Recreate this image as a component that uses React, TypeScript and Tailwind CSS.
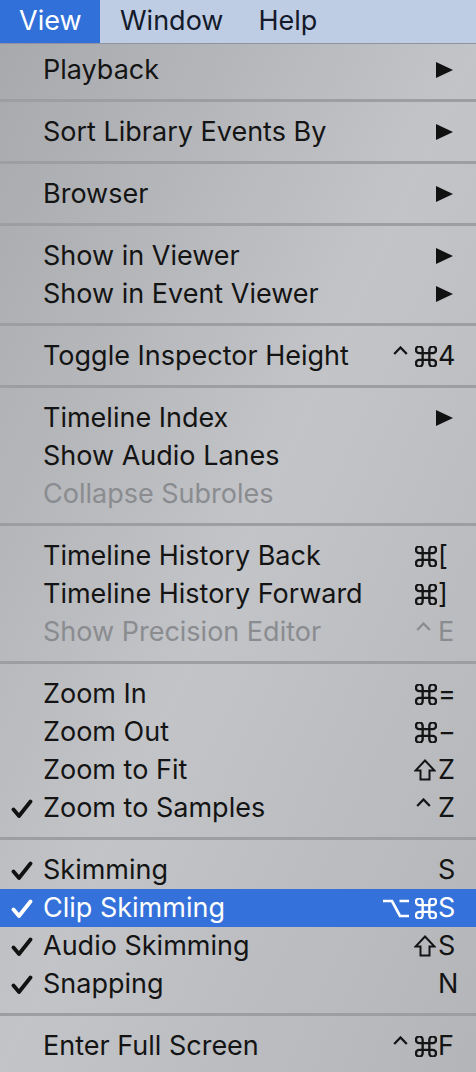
import React from "react";

type Item =
  | { type: "sep" }
  | {
      type: "item";
      label: string;
      sub?: boolean;
      mods?: string[];
      k?: string;
      checked?: boolean;
      disabled?: boolean;
      active?: boolean;
    };

const items: Item[] = [
  { type: "item", label: "Playback", sub: true },
  { type: "sep" },
  { type: "item", label: "Sort Library Events By", sub: true },
  { type: "sep" },
  { type: "item", label: "Browser", sub: true },
  { type: "sep" },
  { type: "item", label: "Show in Viewer", sub: true },
  { type: "item", label: "Show in Event Viewer", sub: true },
  { type: "sep" },
  { type: "item", label: "Toggle Inspector Height", mods: ["ctrl", "cmd"], k: "4" },
  { type: "sep" },
  { type: "item", label: "Timeline Index", sub: true },
  { type: "item", label: "Show Audio Lanes" },
  { type: "item", label: "Collapse Subroles", disabled: true },
  { type: "sep" },
  { type: "item", label: "Timeline History Back", mods: ["cmd"], k: "[" },
  { type: "item", label: "Timeline History Forward", mods: ["cmd"], k: "]" },
  { type: "item", label: "Show Precision Editor", mods: ["ctrl"], k: "E", disabled: true },
  { type: "sep" },
  { type: "item", label: "Zoom In", mods: ["cmd"], k: "=" },
  { type: "item", label: "Zoom Out", mods: ["cmd"], k: "−" },
  { type: "item", label: "Zoom to Fit", mods: ["shift"], k: "Z" },
  { type: "item", label: "Zoom to Samples", mods: ["ctrl"], k: "Z", checked: true },
  { type: "sep" },
  { type: "item", label: "Skimming", k: "S", checked: true },
  { type: "item", label: "Clip Skimming", mods: ["opt", "cmd"], k: "S", checked: true, active: true },
  { type: "item", label: "Audio Skimming", mods: ["shift"], k: "S", checked: true },
  { type: "item", label: "Snapping", k: "N", checked: true },
  { type: "sep" },
  { type: "item", label: "Enter Full Screen", mods: ["ctrl", "cmd"], k: "F" },
];

function Check({ color }: { color: string }) {
  return (
    <svg width="22" height="20" viewBox="0 0 22 20">
      <path
        d="M2.5 10.5 L8 17 L19.5 2.5"
        fill="none"
        stroke={color}
        strokeWidth="3.8"
        strokeLinecap="round"
        strokeLinejoin="round"
      />
    </svg>
  );
}

function Arrow() {
  return (
    <svg width="17" height="16" viewBox="0 0 17 16">
      <polygon points="0,0 17,8 0,16" fill="#111" />
    </svg>
  );
}

function Mod({ kind, color }: { kind: string; color: string }) {
  if (kind === "ctrl") {
    return (
      <span className="w-[22px] h-[38px] flex items-start pt-[9px]">
        <svg width="15" height="9" viewBox="0 0 15 9">
          <polyline
            points="1.2,8 7.5,1.5 13.8,8"
            fill="none"
            stroke={color}
            strokeWidth="2.3"
          />
        </svg>
      </span>
    );
  }
  if (kind === "shift") {
    return (
      <span className="w-[24px] flex items-center">
        <svg width="22" height="22" viewBox="0 0 22 22">
          <path
            d="M11 1.5 L20.5 11.5 L15.5 11.5 L15.5 20.5 L6.5 20.5 L6.5 11.5 L1.5 11.5 Z"
            fill="none"
            stroke={color}
            strokeWidth="2"
          />
        </svg>
      </span>
    );
  }
  if (kind === "opt") {
    return (
      <span className="w-[32px] flex items-center">
        <svg width="26" height="19" viewBox="0 0 26 19">
          <path
            d="M0 2 L9 2 L17 17 L26 17 M16.5 2 L26 2"
            fill="none"
            stroke={color}
            strokeWidth="2.7"
          />
        </svg>
      </span>
    );
  }
  return (
    <span className="w-[23px] flex items-center">
      <svg width="22" height="21" viewBox="2.6 2.6 18.8 18.8">
        <path
          d="M15 6v12a3 3 0 1 0 3-3H6a3 3 0 1 0 3 3V6a3 3 0 1 0-3 3h12a3 3 0 1 0-3-3"
          fill="none"
          stroke={color}
          strokeWidth="2.1"
        />
      </svg>
    </span>
  );
}

export default function App() {
  return (
    <div
      className="w-[476px] h-[1072px] overflow-hidden flex flex-col"
      style={{ fontFamily: "Inter, 'Noto Sans', sans-serif" }}
    >
      {/* Menu bar */}
      <div className="h-[44px] shrink-0 flex items-stretch bg-[#bfcde4] border-b border-[#8e959f] text-[27px] text-[#131a2b]">
        <div className="w-[100px] bg-[#3170d8] text-white flex items-center pl-[19px]">
          View
        </div>
        <div className="flex items-center pl-[20px]">Window</div>
        <div className="flex items-center pl-[35px]">Help</div>
      </div>

      {/* Menu */}
      <div className="flex-1 flex flex-col py-[7px] bg-gradient-to-br from-[#a7a9ad] via-[#c2c4c8] to-[#b3b5b9] text-[27px] text-[#141414]">
        {items.map((it, i) =>
          it.type === "sep" ? (
            <div key={i} className="h-[24px] shrink-0 pt-[10px]">
              <div className="h-[3px] bg-[#9c9ea2]" />
            </div>
          ) : (
            <div
              key={i}
              className={`h-[38px] shrink-0 flex items-center pr-[19px] ${
                it.active ? "bg-[#3571da] text-white" : ""
              } ${it.disabled ? "text-[#8a8c90]" : ""}`}
            >
              <div className="w-[43px] shrink-0 flex justify-center pl-[1px] pt-[1px]">
                {it.checked && <Check color={it.active ? "#fff" : "#111"} />}
              </div>
              <div className="flex-1 whitespace-nowrap">{it.label}</div>
              {it.sub && (
                <div className="pr-[4px] flex items-center">
                  <Arrow />
                </div>
              )}
              {it.k && (
                <div className="flex items-center h-[38px]">
                  {it.mods?.map((m, j) => (
                    <Mod
                      key={j}
                      kind={m}
                      color={it.active ? "#fff" : it.disabled ? "#8a8c90" : "#141414"}
                    />
                  ))}
                  <span className="w-[19px] whitespace-nowrap">{it.k}</span>
                </div>
              )}
            </div>
          )
        )}
      </div>
    </div>
  );
}
